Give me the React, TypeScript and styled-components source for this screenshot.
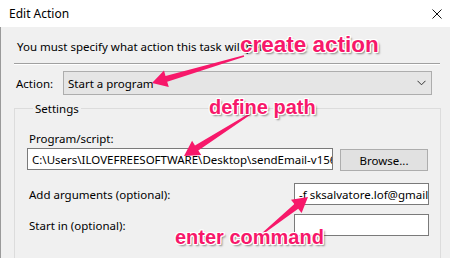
import React from 'react';
import styled, { createGlobalStyle } from 'styled-components';

const GlobalStyle = createGlobalStyle`
  html, body {
    margin: 0;
    padding: 0;
    width: 450px;
    height: 258px;
    overflow: hidden;
    background: #f0f0f0;
  }
  * { box-sizing: border-box; }
`;

const Dialog = styled.div`
  position: relative;
  width: 450px;
  height: 258px;
  overflow: hidden;
  font-family: "Noto Sans", "Liberation Sans", sans-serif;
  font-size: 11.5px;
  color: #000;
  background: #f0f0f0;
`;

const TitleBar = styled.div`
  height: 27px;
  background: #fff;
  display: flex;
  align-items: center;
  justify-content: space-between;
  padding: 0 8px 0 9px;
`;

const Title = styled.span`
  font-size: 12px;
`;

const Body = styled.div`
  height: 231px;
  border-left: 1px solid #9a9a9a;
  padding: 9px 10px 0 12px;
`;

const Intro = styled.div`
  padding-left: 4px;
  line-height: 22px;
`;

const Separator = styled.div`
  height: 2px;
  margin: 5px 0 6px 1px;
  border-top: 1px solid #a0a0a0;
  border-bottom: 1px solid #fff;
`;

const ActionRow = styled.div`
  display: flex;
  align-items: center;
  padding-left: 3px;
`;

const RowLabel = styled.span`
  width: 47px;
  flex: none;
`;

const Combo = styled.div`
  width: 369px;
  height: 24px;
  background: #e5e5e5;
  border: 1px solid #adadad;
  display: flex;
  align-items: center;
  justify-content: space-between;
  padding: 0 5px 0 4px;
`;

const Group = styled.fieldset`
  margin: 6px 0 0 1px;
  width: 427px;
  height: 180px;
  border: 1px solid #dcdcdc;
  padding: 4px 11px 0 12px;
`;

const Legend = styled.legend`
  padding: 0 2px;
  margin-left: 6px;
`;

const FieldLabel = styled.div`
  padding-left: 2px;
  line-height: 16px;
  margin-top: 11px;
`;

const PathRow = styled.div`
  display: flex;
  gap: 7px;
  margin-top: 1px;
  align-items: flex-start;
`;

const TextBox = styled.div<{ $w: number }>`
  width: ${p => p.$w}px;
  height: 22px;
  background: #fff;
  border: 1px solid #7a7a7a;
  padding: 0 4px;
  display: flex;
  align-items: center;
  white-space: nowrap;
  overflow: hidden;
`;

const Button = styled.div`
  width: 88px;
  height: 22px;
  margin-top: 1px;
  background: #e1e1e1;
  border: 1px solid #adadad;
  display: flex;
  align-items: center;
  justify-content: center;
`;

const OptRow = styled.div<{ $top: number }>`
  display: flex;
  align-items: center;
  justify-content: space-between;
  margin-top: ${p => p.$top}px;
  padding-left: 2px;
`;

const Note = styled.div<{ $x: number; $y: number; $size: number }>`
  position: absolute;
  left: ${p => p.$x}px;
  top: ${p => p.$y}px;
  font-family: "Liberation Sans", Arial, sans-serif;
  font-weight: 700;
  font-size: ${p => p.$size}px;
  line-height: 1;
  color: #f7186a;
  white-space: nowrap;
  text-shadow:
    1px 0 0 #fff, -1px 0 0 #fff, 0 1px 0 #fff, 0 -1px 0 #fff,
    1px 1px 0 #fff, -1px -1px 0 #fff, 1px -1px 0 #fff, -1px 1px 0 #fff,
    2px 2px 2px rgba(0, 0, 0, 0.45);
`;

const Overlay = styled.svg`
  position: absolute;
  left: 0;
  top: 0;
  pointer-events: none;
`;

// tapered arrow from tail (x1,y1) to tip (x2,y2)
const arrowPath = (x1: number, y1: number, x2: number, y2: number) => {
  const dx = x2 - x1;
  const dy = y2 - y1;
  const len = Math.hypot(dx, dy);
  const ux = dx / len;
  const uy = dy / len;
  const nx = -uy;
  const ny = ux;
  const head = 15;
  const bx = x2 - ux * head;
  const by = y2 - uy * head;
  const pts = [
    [x1 + nx * 0.8, y1 + ny * 0.8],
    [bx + nx * 3, by + ny * 3],
    [bx + nx * 8.5, by + ny * 8.5],
    [x2, y2],
    [bx - nx * 8.5, by - ny * 8.5],
    [bx - nx * 3, by - ny * 3],
    [x1 - nx * 0.8, y1 - ny * 0.8],
  ];
  return 'M' + pts.map(p => p[0].toFixed(1) + ',' + p[1].toFixed(1)).join(' L') + ' Z';
};

const arrows = [
  [244, 56, 152, 83],
  [250, 114, 184, 156],
  [262, 234, 308, 197],
];

export default function App() {
  return (
    <Dialog>
      <GlobalStyle />
      <TitleBar>
        <Title>Edit Action</Title>
        <svg width="10" height="10" viewBox="0 0 10 10">
          <path d="M0.5 0.5 L9.5 9.5 M9.5 0.5 L0.5 9.5" stroke="#111" strokeWidth="1" />
        </svg>
      </TitleBar>
      <Body>
        <Intro>You must specify what action this task will perform.</Intro>
        <Separator />
        <ActionRow>
          <RowLabel>Action:</RowLabel>
          <Combo>
            <span>Start a program</span>
            <svg width="9" height="6" viewBox="0 0 9 6">
              <path d="M0.5 0.8 L4.5 4.8 L8.5 0.8" fill="none" stroke="#333" strokeWidth="1" />
            </svg>
          </Combo>
        </ActionRow>
        <Group>
          <Legend>Settings</Legend>
          <FieldLabel>Program/script:</FieldLabel>
          <PathRow>
            <TextBox $w={306}>C:\Users\ILOVEFREESOFTWARE\Desktop\sendEmail-v156</TextBox>
            <Button>Browse...</Button>
          </PathRow>
          <OptRow $top={12}>
            <span>Add arguments (optional):</span>
            <TextBox $w={135}>-f sksalvatore.lof@gmail.com</TextBox>
          </OptRow>
          <OptRow $top={9}>
            <span>Start in (optional):</span>
            <TextBox $w={135} />
          </OptRow>
        </Group>
      </Body>

      <Overlay width="450" height="258" viewBox="0 0 450 258">
        {arrows.map((a, i) => (
          <path key={i} d={arrowPath(a[0], a[1], a[2], a[3])} fill="#f7186a" />
        ))}
      </Overlay>
      <Note $x={240} $y={34} $size={22.5}>create action</Note>
      <Note $x={209} $y={97} $size={20}>define path</Note>
      <Note $x={175} $y={227} $size={20}>enter command</Note>
    </Dialog>
  );
}
